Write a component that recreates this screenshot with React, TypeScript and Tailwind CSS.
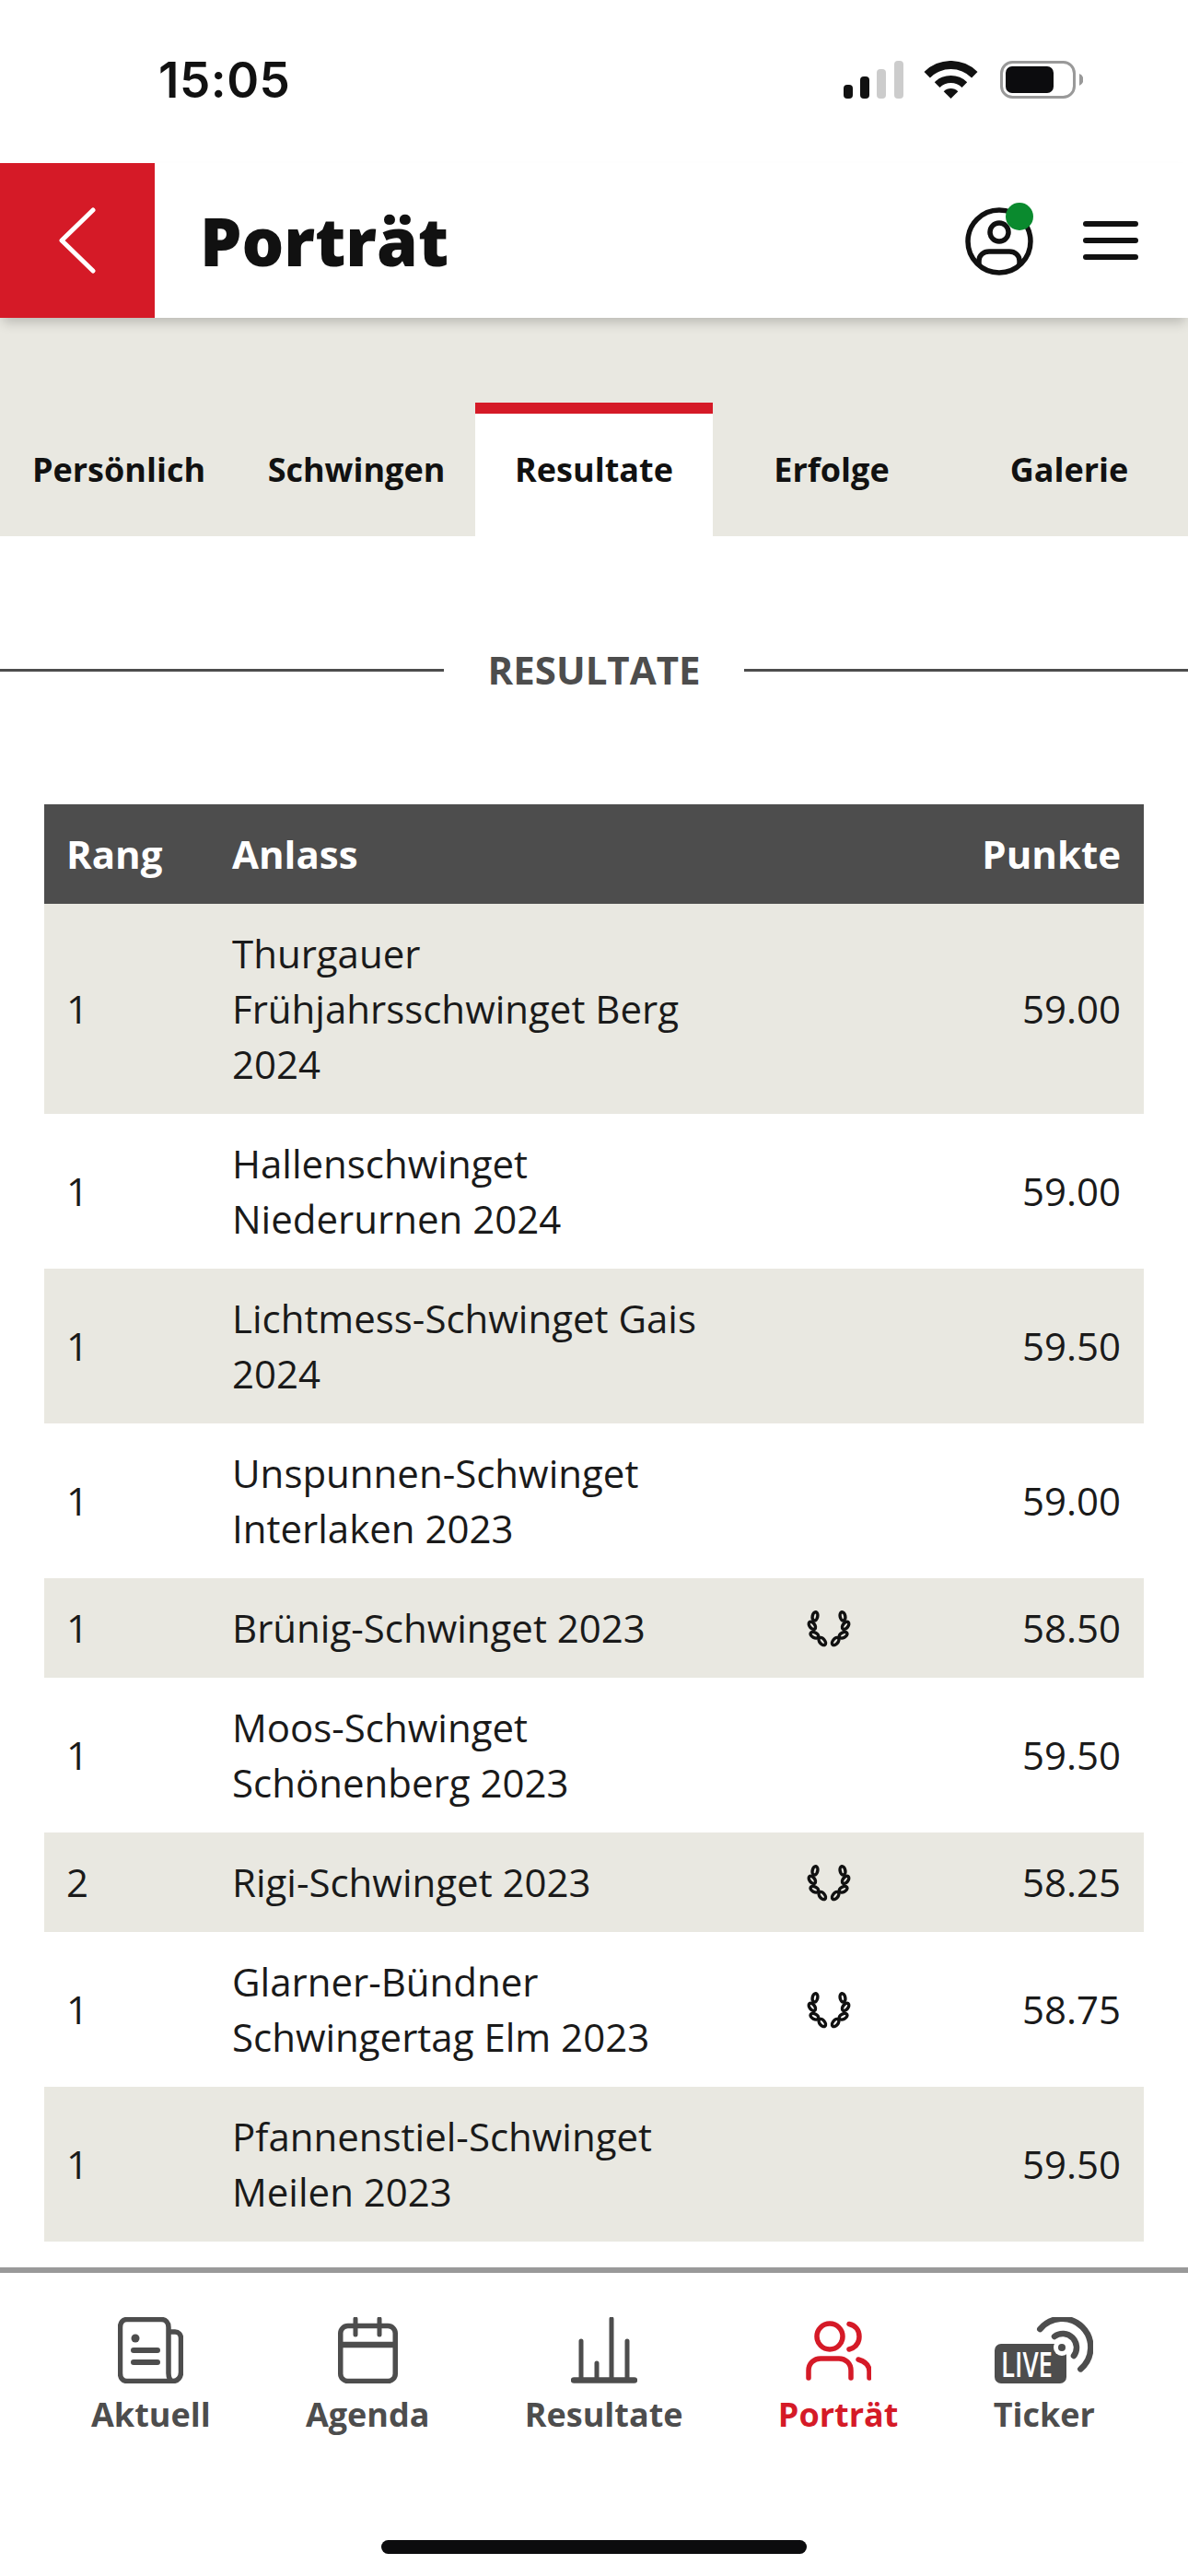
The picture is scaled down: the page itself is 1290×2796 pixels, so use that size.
const rows = [
	{ rang: "1", anlass: ["Thurgauer", "Frühjahrsschwinget Berg", "2024"], punkte: "59.00" },
	{ rang: "1", anlass: ["Hallenschwinget", "Niederurnen 2024"], punkte: "59.00" },
	{ rang: "1", anlass: ["Lichtmess-Schwinget Gais", "2024"], punkte: "59.50" },
	{ rang: "1", anlass: ["Unspunnen-Schwinget", "Interlaken 2023"], punkte: "59.00" },
	{ rang: "1", anlass: ["Brünig-Schwinget 2023"], punkte: "58.50", kranz: true },
	{ rang: "1", anlass: ["Moos-Schwinget", "Schönenberg 2023"], punkte: "59.50" },
	{ rang: "2", anlass: ["Rigi-Schwinget 2023"], punkte: "58.25", kranz: true },
	{ rang: "1", anlass: ["Glarner-Bündner", "Schwingertag Elm 2023"], punkte: "58.75", kranz: true },
	{ rang: "1", anlass: ["Pfannenstiel-Schwinget", "Meilen 2023"], punkte: "59.50" },
];

const tabs = ["Persönlich", "Schwingen", "Resultate", "Erfolge", "Galerie"];

function StatusBar() {
	return (
		<div className="h-[177px] flex items-start justify-between pl-[172px] pr-[114px] pt-[66px]">
			<span className="font-['Inter',sans-serif] font-semibold text-[53px] leading-[42px] tracking-[0.5px] text-[#111]">
				15:05
			</span>
			<svg width="260" height="41" viewBox="0 0 260 41" aria-hidden="true">
				<rect x="0" y="26" width="10" height="15" rx="4" fill="#111" />
				<rect x="18" y="17" width="10" height="24" rx="4" fill="#111" />
				<rect x="36" y="9" width="10" height="32" rx="4" fill="#ccc" />
				<rect x="55" y="0" width="10" height="41" rx="4" fill="#ccc" />
				<path d="M87.500 12 A 41 41 0 0 1 145.500 12 L 139.100 18.400 A 32 32 0 0 0 93.900 18.400 Z" fill="#111" />
				<path d="M98.800 23.300 A 25 25 0 0 1 134.200 23.300 L 128.500 29 A 17 17 0 0 0 104.500 29 Z" fill="#111" />
				<path d="M108.700 33.200 A 11 11 0 0 1 124.300 33.200 L 116.500 41 Z" fill="#111" />
				<rect x="171.500" y="1.500" width="79" height="38" rx="12" fill="none" stroke="#999" strokeWidth="3" />
				<rect x="176" y="6" width="52" height="29" rx="7" fill="#0c0c0e" />
				<path d="M256 14 A 7 7 0 0 1 256 27 Z" fill="#999" />
			</svg>
		</div>
	);
}

function Header() {
	return (
		<div className="relative z-10 h-[168px] flex items-center bg-white shadow-[0_8px_12px_-3px_rgba(0,0,0,0.2)]">
			<div className="w-[168px] h-full bg-[#d51a27] flex items-center justify-center">
				<svg width="40" height="72" viewBox="0 0 40 72" fill="none" aria-hidden="true">
					<path d="M37 3 L3 36 L37 69" stroke="#fff" strokeWidth="5" strokeLinecap="round" strokeLinejoin="round" />
				</svg>
			</div>
			<h1 className="ml-[49px] font-['Open_Sans',sans-serif] font-extrabold text-[72px] leading-none text-[#111]">
				Porträt
			</h1>
			<div className="ml-auto mr-[54px] flex items-center gap-[54px]">
				<div className="relative w-[74px] h-[74px] mt-[2px]">
					<svg width="74" height="74" viewBox="0 0 74 74" fill="none" aria-hidden="true">
						<circle cx="37" cy="37" r="34" stroke="#111" strokeWidth="5.500" />
						<circle cx="37" cy="27" r="10" stroke="#111" strokeWidth="5.500" />
						<path d="M15 62 V58 C15 52 20 48 26 48 H48 C54 48 59 52 59 58 V62" stroke="#111" strokeWidth="5.500" />
					</svg>
					<span className="absolute top-[-5px] right-0 w-[30px] h-[30px] rounded-full bg-[#0a8a2e]" />
				</div>
				<svg width="60" height="42" viewBox="0 0 60 42" aria-hidden="true">
					<rect x="0" y="0" width="60" height="6" rx="3" fill="#111" />
					<rect x="0" y="18" width="60" height="6" rx="3" fill="#111" />
					<rect x="0" y="36" width="60" height="6" rx="3" fill="#111" />
				</svg>
			</div>
		</div>
	);
}

function Tabs() {
	return (
		<div className="h-[237px] bg-[#e9e8e1] flex items-end">
			{tabs.map((tab) => (
				<div
					key={tab}
					className={`w-[258px] h-[145px] pb-[12px] border-t-[12px] flex items-center justify-center font-['Open_Sans',sans-serif] font-bold text-[36px] text-[#111] ${
						tab === "Resultate" ? "bg-white border-[#d51a27]" : "border-transparent"
					}`}
				>
					{tab}
				</div>
			))}
		</div>
	);
}

function Kranz() {
	const leaves = [
		{ x: 132, y: 68, r: 12 },
		{ x: 122, y: 100, r: -38 },
		{ x: 130, y: 133, r: -62 },
		{ x: 157, y: 155, r: -40 },
	];
	return (
		<svg width="50" height="41" viewBox="100 45 160 130" fill="none" aria-hidden="true" className="block">
			{leaves.map((l) => (
				<g key={l.y}>
					<ellipse cx={l.x} cy={l.y} rx="9" ry="15" stroke="#111" strokeWidth="11" transform={`rotate(${l.r} ${l.x} ${l.y})`} />
					<ellipse cx={360 - l.x} cy={l.y} rx="9" ry="15" stroke="#111" strokeWidth="11" transform={`rotate(${-l.r} ${360 - l.x} ${l.y})`} />
				</g>
			))}
		</svg>
	);
}

function ResultTable() {
	return (
		<table className="mx-[48px] mt-[116px] w-[1194px] table-fixed font-['Open_Sans',sans-serif] text-[42px] leading-[60px] text-[#1a1a1a]">
			<colgroup>
				<col className="w-[204px]" />
				<col className="w-[600px]" />
				<col className="w-[120px]" />
				<col />
			</colgroup>
			<thead>
				<tr className="h-[108px] bg-[#4d4d4d] text-white text-left">
					<th className="pl-[24px] font-bold">Rang</th>
					<th className="font-bold">Anlass</th>
					<th />
					<th className="pr-[25px] font-bold text-right">Punkte</th>
				</tr>
			</thead>
			<tbody>
				{rows.map((row, i) => (
					<tr key={row.anlass[0]} className={i % 2 === 0 ? "bg-[#e9e8e1]" : "bg-white"}>
						<td className="pl-[24px]">{row.rang}</td>
						<td className="py-[24px]">
							{row.anlass.map((line) => (
								<div key={line}>{line}</div>
							))}
						</td>
						<td className="pl-[23px]">{row.kranz && <Kranz />}</td>
						<td className="pr-[25px] text-right">{row.punkte}</td>
					</tr>
				))}
			</tbody>
		</table>
	);
}

function NavAktuell() {
	return (
		<svg width="71" height="72" viewBox="0 0 71 72" fill="none" stroke="#4d4d4d" strokeWidth="5.500" aria-hidden="true">
			<path d="M56 16 H62 C66 16 68.500 19 68.500 23 V60 C68.500 65 65 69.500 60 69.500 H10 C5.500 69.500 2.500 66 2.500 61 V11 C2.500 6 5.500 2.500 10 2.500 H47 C52 2.500 55 6 55 11 V61 C55 66 57 69.500 60 69.500" />
			<circle cx="19" cy="23" r="4.500" fill="#4d4d4d" stroke="none" />
			<path d="M17 36 H43 M17 49 H43" strokeWidth="6" strokeLinecap="round" />
		</svg>
	);
}

function NavAgenda() {
	return (
		<svg width="65" height="72" viewBox="0 0 65 72" fill="none" stroke="#4d4d4d" strokeWidth="5.500" aria-hidden="true">
			<rect x="2.750" y="9.500" width="59.500" height="60" rx="8" />
			<path d="M2.750 30 H62" strokeWidth="6.500" />
			<path d="M19 2 V19 M45 2 V19" strokeWidth="5" strokeLinecap="round" />
		</svg>
	);
}

function NavResultate() {
	return (
		<svg width="72" height="72" viewBox="0 0 72 72" fill="none" stroke="#4d4d4d" strokeWidth="5" strokeLinecap="round" aria-hidden="true">
			<path d="M11 26 V66 M28 50 V66 M44 2 V66 M61 26 V66" />
			<path d="M3 68.500 H69" strokeWidth="6.500" />
		</svg>
	);
}

function NavPortraet() {
	return (
		<svg width="72" height="72" viewBox="0 0 72 72" fill="none" stroke="#d51a27" strokeWidth="5.500" strokeLinecap="round" aria-hidden="true">
			<circle cx="27" cy="21" r="14" />
			<path d="M4 66 V58 C4 50 10 45 17 45 H37 C44 45 50 50 50 58 V66" />
			<path d="M48 7.500 C55 9 59 14 59 21 C59 28 55 33 48 35" />
			<path d="M58 46 C65 48 70 52 70 59 V66" />
		</svg>
	);
}

function NavTicker() {
	return (
		<svg width="107" height="72" viewBox="0 0 107 72" aria-hidden="true">
			<rect x="0" y="29" width="78" height="43" rx="7" fill="#4d4d4d" />
			<circle cx="73" cy="33" r="9" fill="#fff" />
			<circle cx="73" cy="33" r="4" fill="#4d4d4d" />
			<text
				x="7"
				y="65"
				fill="#fff"
				textLength="56"
				lengthAdjust="spacingAndGlyphs"
				className="font-['Open_Sans',sans-serif] font-semibold text-[37px]"
			>
				LIVE
			</text>
			<path d="M65 21 A 15 15 0 0 1 86 42" fill="none" stroke="#4d4d4d" strokeWidth="6.500" strokeLinecap="round" />
			<path d="M49.300 13.100 A 31 31 0 1 1 93.300 56.400" fill="none" stroke="#4d4d4d" strokeWidth="6.500" strokeLinecap="round" />
		</svg>
	);
}

const navItems = [
	{ label: "Aktuell", icon: <NavAktuell /> },
	{ label: "Agenda", icon: <NavAgenda /> },
	{ label: "Resultate", icon: <NavResultate /> },
	{ label: "Porträt", icon: <NavPortraet />, active: true },
	{ label: "Ticker", icon: <NavTicker /> },
];

function BottomNav() {
	return (
		<div className="mt-[28px] border-t-[6px] border-[#999] flex justify-between pl-[99px] pr-[101px] pt-[48px]">
			{navItems.map((item) => (
				<div
					key={item.label}
					className={`flex flex-col items-center font-['Open_Sans',sans-serif] font-bold text-[36px] leading-[50px] ${
						item.active ? "text-[#d51a27]" : "text-[#4d4d4d]"
					}`}
				>
					{item.icon}
					<span className="mt-[9px]">{item.label}</span>
				</div>
			))}
		</div>
	);
}

export default function App() {
	return (
		<div className="w-[1290px] h-[2796px] bg-white flex flex-col">
			<StatusBar />
			<Header />
			<Tabs />
			{/* section title */}
			<div className="mt-[115px] h-[60px] flex items-center">
				<div className="h-[3px] w-[482px] bg-[#4d4d4d]" />
				<div className="flex-1 text-center font-['Open_Sans',sans-serif] font-bold text-[42px] leading-[60px] text-[#4d4d4d]">
					RESULTATE
				</div>
				<div className="h-[3px] w-[482px] bg-[#4d4d4d]" />
			</div>
			<ResultTable />
			<BottomNav />
			<div className="mt-auto mb-[24px] mx-auto w-[462px] h-[15px] rounded-full bg-[#0c0c0e]" />
		</div>
	);
}
